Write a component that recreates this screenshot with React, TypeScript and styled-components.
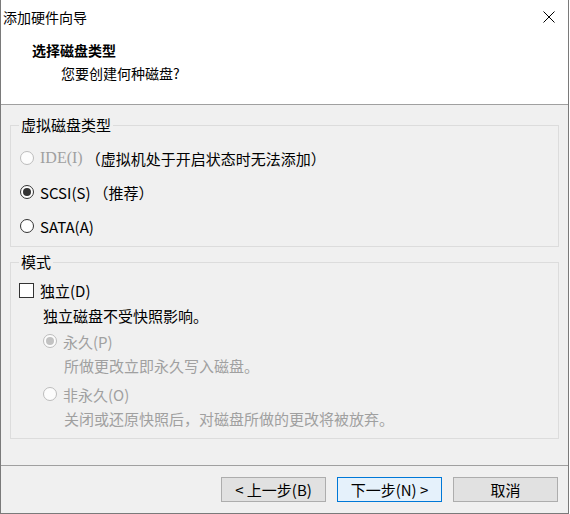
import React from "react";
import styled, { createGlobalStyle } from "styled-components";

const GlobalStyle = createGlobalStyle`
  html, body {
    margin: 0;
    padding: 0;
    background: #ffffff;
  }
  body {
    font-family: "Noto Sans CJK SC", "Noto Sans", sans-serif;
    font-size: 15px;
    color: #000;
  }
`;

const Window = styled.div`
  box-sizing: border-box;
  width: 569px;
  height: 514px;
  display: flex;
  flex-direction: column;
  border: 1px solid #7a7a7a;
  border-top: none;
  background: #f0f0f0;
`;

const Header = styled.div`
  height: 104px;
  background: #ffffff;
  border-bottom: 1px solid #a0a0a0;
  display: flex;
  flex-direction: column;
`;

const TitleBar = styled.div`
  height: 33px;
  display: flex;
  align-items: center;
  justify-content: space-between;
  padding: 0 13px 0 2px;
`;

const TitleText = styled.span`
  font-size: 14px;
  line-height: 20px;
`;

const CloseButton = styled.button`
  width: 12px;
  height: 12px;
  padding: 0;
  border: none;
  background: transparent;
  display: flex;
  align-items: center;
  justify-content: center;
`;

const PageTitle = styled.div`
  font-size: 14px;
  font-weight: 700;
  line-height: 20px;
  padding: 7px 0 0 31px;
`;

const PageSubtitle = styled.div`
  font-size: 14px;
  line-height: 20px;
  padding: 3px 0 0 60px;
`;

const Body = styled.div`
  flex: 1;
  display: flex;
  flex-direction: column;
  gap: 6px;
  padding: 11px 9px 0 9px;
`;

const GroupBox = styled.fieldset<{ $bottom: number }>`
  margin: 0;
  min-width: 0;
  border: 1px solid #dcdcdc;
  padding: 0 9px ${(p) => p.$bottom}px 9px;
  display: flex;
  flex-direction: column;
`;

const Legend = styled.legend`
  padding: 0 2px;
  margin-left: -1px;
  line-height: 18px;
`;

const OptionRow = styled.label<{ $height: number; $indent?: number }>`
  height: ${(p) => p.$height}px;
  display: flex;
  align-items: center;
  padding-left: ${(p) => p.$indent ?? 0}px;
  white-space: nowrap;
`;

const RadioMark = styled.span<{ $checked?: boolean; $disabled?: boolean }>`
  box-sizing: border-box;
  width: 14px;
  height: 14px;
  border-radius: 50%;
  border: 1px solid ${(p) => (p.$disabled ? "#bcbcbc" : "#333333")};
  background: ${(p) => (p.$disabled ? "#fcfcfc" : "#ffffff")};
  display: flex;
  align-items: center;
  justify-content: center;
  margin-right: 6px;
  flex-shrink: 0;

  &::after {
    content: "";
    width: 8px;
    height: 8px;
    border-radius: 50%;
    background: ${(p) => (p.$disabled ? "#c2c2c2" : "#333333")};
    display: ${(p) => (p.$checked ? "block" : "none")};
  }
`;

const CheckMark = styled.span`
  box-sizing: border-box;
  width: 15px;
  height: 15px;
  border: 1px solid #333333;
  background: #ffffff;
  margin: 0 6px 0 -1px;
  flex-shrink: 0;
`;

const OptionText = styled.span<{ $disabled?: boolean; $serif?: boolean }>`
  color: ${(p) => (p.$disabled ? "#a0a0a0" : "#000000")};
  font-family: ${(p) =>
    p.$serif
      ? `"Liberation Serif", "Noto Sans CJK SC", serif`
      : `"Noto Sans CJK SC", "Noto Sans", sans-serif`};
  font-size: ${(p) => (p.$serif ? "16px" : "15px")};
`;

const Hint = styled.span`
  margin-left: 3px;
`;

const Note = styled.div<{ $height: number; $indent: number; $disabled?: boolean }>`
  height: ${(p) => p.$height}px;
  display: flex;
  align-items: center;
  padding-left: ${(p) => p.$indent}px;
  color: ${(p) => (p.$disabled ? "#a0a0a0" : "#000000")};
  white-space: nowrap;
`;

const SubOptions = styled.div`
  display: flex;
  flex-direction: column;
  gap: 5px;
`;

const SubOption = styled.div`
  display: flex;
  flex-direction: column;
`;

const Footer = styled.div`
  box-sizing: border-box;
  height: 48px;
  flex-shrink: 0;
  border-top: 1px solid #a0a0a0;
  display: flex;
  justify-content: flex-end;
  align-items: flex-start;
  gap: 11px;
  padding: 11px 10px 0 0;
`;

const Button = styled.button<{ $default?: boolean }>`
  box-sizing: border-box;
  width: 105px;
  height: 25px;
  padding: 0;
  font-family: "Noto Sans CJK SC", "Noto Sans", sans-serif;
  font-size: 15px;
  color: #000;
  background: ${(p) => (p.$default ? "#e5f1fb" : "#e1e1e1")};
  border: 1px solid ${(p) => (p.$default ? "#0078d7" : "#adadad")};
  display: flex;
  align-items: center;
  justify-content: center;
`;

const CloseIcon = () => (
  <svg width="12" height="12" viewBox="0 0 12 12">
    <path d="M0.5 0.5 L11.5 11.5 M11.5 0.5 L0.5 11.5" stroke="#000" strokeWidth="1" fill="none" />
  </svg>
);

const App: React.FC = () => {
  return (
    <>
      <GlobalStyle />
      <Window>
        <Header>
          <TitleBar>
            <TitleText>添加硬件向导</TitleText>
            <CloseButton aria-label="关闭">
              <CloseIcon />
            </CloseButton>
          </TitleBar>
          <PageTitle>选择磁盘类型</PageTitle>
          <PageSubtitle>您要创建何种磁盘?</PageSubtitle>
        </Header>

        <Body>
          <GroupBox $bottom={3}>
            <Legend>虚拟磁盘类型</Legend>
            <OptionRow $height={34} style={{ marginTop: 7 }}>
              <RadioMark $disabled />
              <OptionText $disabled $serif>IDE(I)</OptionText>
              <Hint>（虚拟机处于开启状态时无法添加）</Hint>
            </OptionRow>
            <OptionRow $height={34}>
              <RadioMark $checked />
              <OptionText>SCSI(S)</OptionText>
              <Hint>（推荐）</Hint>
            </OptionRow>
            <OptionRow $height={34}>
              <RadioMark />
              <OptionText>SATA(A)</OptionText>
            </OptionRow>
          </GroupBox>

          <GroupBox $bottom={9}>
            <Legend>模式</Legend>
            <OptionRow $height={24} style={{ marginTop: 7 }}>
              <CheckMark />
              <OptionText>独立(D)</OptionText>
            </OptionRow>
            <Note $height={26} $indent={23}>独立磁盘不受快照影响。</Note>
            <SubOptions>
              <SubOption>
                <OptionRow $height={26} $indent={23}>
                  <RadioMark $checked $disabled />
                  <OptionText $disabled>永久(P)</OptionText>
                </OptionRow>
                <Note $height={22} $indent={44} $disabled>所做更改立即永久写入磁盘。</Note>
              </SubOption>
              <SubOption>
                <OptionRow $height={26} $indent={23}>
                  <RadioMark $disabled />
                  <OptionText $disabled>非永久(O)</OptionText>
                </OptionRow>
                <Note $height={22} $indent={44} $disabled>
                  关闭或还原快照后，对磁盘所做的更改将被放弃。
                </Note>
              </SubOption>
            </SubOptions>
          </GroupBox>
        </Body>

        <Footer>
          <Button>&lt; 上一步(B)</Button>
          <Button $default>下一步(N) &gt;</Button>
          <Button>取消</Button>
        </Footer>
      </Window>
    </>
  );
};

export default App;
